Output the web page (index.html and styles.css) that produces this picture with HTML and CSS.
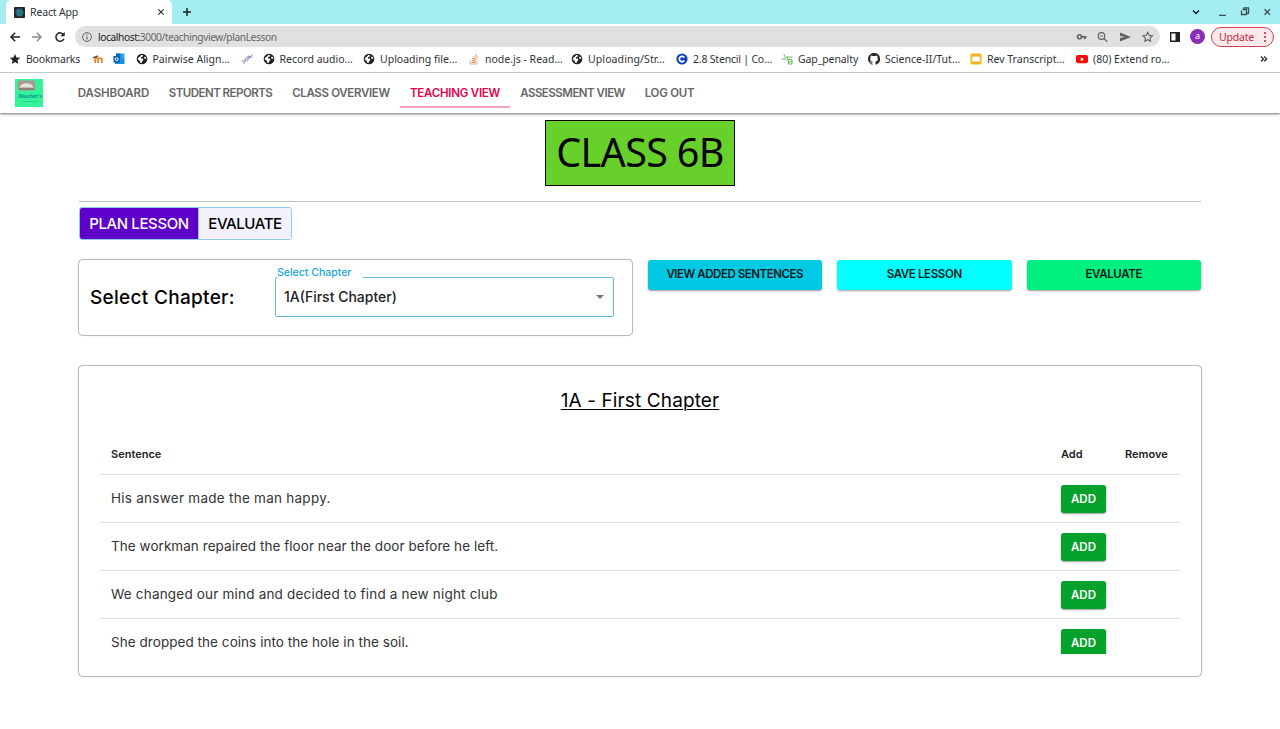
FILE: index.html
```html
<!DOCTYPE html>
<html lang="en">
<head>
<meta charset="utf-8">
<title>React App</title>
<link rel="stylesheet" href="styles.css">
</head>
<body>
<svg class="defs" width="0" height="0">
  <symbol id="globe" viewBox="0 0 12 12"><circle cx="6" cy="6" r="5.3" fill="#202124"/><path d="M1.700 5.200 4 3.600 5.300 2l1.800.2-.6 1.500-1.700.6.2 1.100 2 .2.3 1.400-1.300 1.800-.6 1.300-1.500-.6.2-1.500L2.400 7zM8 3.800l1.800.2.5 1.700-1.800.1z" fill="#fff"/></symbol>
</svg>
<div class="tabstrip">
  <div class="tab">
    <svg class="react" viewBox="0 0 12 12"><rect width="12" height="12" rx="1" fill="#20232a"/><g fill="none" stroke="#35a9c2" stroke-width=".7"><ellipse cx="6" cy="6" rx="4.5" ry="1.8"/><ellipse cx="6" cy="6" rx="4.5" ry="1.8" transform="rotate(60 6 6)"/><ellipse cx="6" cy="6" rx="4.5" ry="1.8" transform="rotate(120 6 6)"/></g><circle cx="6" cy="6" r=".9" fill="#35a9c2"/></svg>
    <span class="tab-title">React App</span>
    <svg class="close" viewBox="0 0 8 8"><path d="m1.3 1.3 5.4 5.4m0-5.4L1.3 6.7" stroke="#333" stroke-width="1.2"/></svg>
  </div>
  <svg class="plus" viewBox="0 0 10 10"><path d="M5 1v8M1 5h8" stroke="#202124" stroke-width="1.5"/></svg>
  <svg class="window" viewBox="0 0 84 12"><g fill="none" stroke="#3b5054" stroke-width="1.3"><path d="m1 4.5 3 3 3-3" stroke="#202124" stroke-width="1.5"/><path d="M27 9.3h7M50.500 3.500h4v5h-5v-4M52 3V1.800h4.500v5.500H55M72.500 3.200l5.500 5.500m0-5.500-5.500 5.500"/></g></svg>
</div>
<div class="toolbar">
  <svg class="navicons" viewBox="0 0 58 14"><g fill="none" stroke="#202124" stroke-width="1.5"><path d="M11 7H2m4.200-4.200L2 7l4.200 4.200"/><path d="M23 7h9m-4.200-4.200L32 7l-4.200 4.200" stroke="#8a8c8e"/><path d="M54.700 4.800a4.200 4.200 0 1 0 .3 4"/></g><path d="M55.700 2v4.300h-4.300z" fill="#202124"/></svg>
  <div class="omnibox">
    <svg class="info" viewBox="0 0 12 12"><circle cx="6" cy="6" r="4.400" fill="none" stroke="#5f6368"/><path d="M6 5.400v3M6 3.300v1.100" stroke="#5f6368" stroke-width="1.100"/></svg>
    <span class="url">localhost:<i>3000/teachingview/planLesson</i></span>
    <svg class="actions" viewBox="0 0 80 14"><g fill="none" stroke="#5f6368" stroke-width="1.200"><circle cx="3.500" cy="6.800" r="2" stroke-width="1.600"/><path d="M5.500 6.800h5M8.800 7v2.300" stroke-width="1.700"/><circle cx="25.500" cy="6" r="3.300"/><path d="m28 8.500 3.400 3.400M24 6h3"/><path d="m71.700 2.300 1.400 3 3.300.4-2.400 2.300.6 3.300-2.900-1.600-2.900 1.600.6-3.300-2.400-2.300 3.300-.4z" stroke-width="1.100"/></g><path d="m44 2.500 11 4.500-11 4.500V8l5-1-5-1z" fill="#5f6368"/></svg>
  </div>
  <svg class="panel" viewBox="0 0 12 12"><path d="M1.700 1.800h8.600v8.400H1.700z" fill="none" stroke="#202124" stroke-width="1.400"/><path d="M6.500 2h4v8h-4z" fill="#202124"/></svg>
  <span class="avatar">a</span>
  <span class="update">Update<svg viewBox="0 0 4 12"><g fill="#c5283d"><circle cx="2" cy="2" r="1.100"/><circle cx="2" cy="6" r="1.100"/><circle cx="2" cy="10" r="1.100"/></g></svg></span>
</div>
<div class="bookmarks">
  <span class="bm b1"><svg viewBox="0 0 12 12"><path d="m6 .9 1.500 3.500 3.800.3-2.900 2.500.9 3.700L6 8.900l-3.300 2 .9-3.700L.7 4.700l3.800-.3z" fill="#202124"/></svg>Bookmarks</span>
  <span class="bm b2"><svg viewBox="0 0 12 12"><path d="M3.200 10V6.500c0-1.900 2.900-1.900 2.900 0V10m0-3.500c0-1.900 3.700-1.900 3.700 0V10" fill="none" stroke="#ee7f2d" stroke-width="1.800"/><path d="m.8 4.300 4.200-1.900 1.800.7-2.800 1.600-2.600.4v2z" fill="#54483d"/></svg></span>
  <span class="bm b3"><svg viewBox="0 0 12 12"><path d="M3 .500h8.500V6H3z" fill="#28a8ea"/><path d="M3 .500h4.500V5H3z" fill="#0364b8"/><path d="m2 6 9.500-.5V11H2z" fill="#1490df"/><path d="M.5 3H7v6.500H.5z" fill="#0a5db5"/><circle cx="3.750" cy="6.200" r="1.500" fill="none" stroke="#fff"/></svg></span>
  <span class="bm b4"><svg><use href="#globe"/></svg>Pairwise Align…</span>
  <span class="bm b5"><svg viewBox="0 0 12 12"><g fill="none"><path d="M.8 8.200c4.200 1 3-5.200 7.200-4.200 1.500 0 2.500-1 3-2.500" stroke="#4e88c7"/><path d="M3 11.300C2.500 6.500 9.500 8.500 7.800 2.500M8 4.200h3.500" stroke="#9b7bbd"/><path d="m4 6.300 2.300 2.300M5.800 4.800 7.800 6.800" stroke="#d08a9b"/></g></svg></span>
  <span class="bm b6"><svg><use href="#globe"/></svg>Record audio…</span>
  <span class="bm b7"><svg><use href="#globe"/></svg>Uploading file…</span>
  <span class="bm b8"><svg viewBox="0 0 12 12"><path d="M2 7.500V11h7V7.500" fill="none" stroke="#bbb5ae"/><path d="M3.500 9.400h4M3.600 7.500l4 .5M4.200 5.400l3.700 1.400M5.500 3.300l3 2.500M7.500 1.300l2 3.300" stroke="#f48024"/></svg>node.js - Read…</span>
  <span class="bm b9"><svg><use href="#globe"/></svg>Uploading/Str…</span>
  <span class="bm b10"><svg viewBox="0 0 12 12"><circle cx="6" cy="6" r="5.600" fill="#1541b8"/><path d="M8.300 4.500a2.700 2.700 0 1 0 0 3" fill="none" stroke="#fff" stroke-width="1.700"/></svg>2.8 Stencil | Co…</span>
  <span class="bm b11"><svg viewBox="0 0 12 12"><path d="M.5 6h3L5 7.500M3 1.500 4.200 4.500M3.500 6l2-2h6M6.500 4v3M7.500 11V6.500h3.500V11zm0-2.200H11" fill="none" stroke="#4fb54a" stroke-width=".9"/></svg>Gap_penalty</span>
  <span class="bm b12"><svg viewBox="0 0 16 16"><path fill="#24292f" d="M8 0C3.580 0 0 3.580 0 8c0 3.540 2.290 6.530 5.470 7.590.4.070.55-.17.55-.38v-1.340c-2.230.48-2.700-1.070-2.700-1.070-.36-.92-.89-1.170-.89-1.170-.73-.5.05-.49.05-.49.81.06 1.230.83 1.230.83.72 1.230 1.880.87 2.340.66.07-.52.28-.87.51-1.070-1.780-.2-3.640-.89-3.640-3.950 0-.87.31-1.590.82-2.150-.08-.2-.36-1.020.08-2.120 0 0 .67-.21 2.200.82a7.600 7.600 0 0 1 4 0c1.530-1.040 2.200-.82 2.200-.82.44 1.100.16 1.920.08 2.120.51.56.82 1.270.82 2.150 0 3.070-1.870 3.750-3.650 3.950.29.25.54.73.54 1.480v2.200c0 .21.15.46.55.38A8 8 0 0 0 8 0z"/></svg>Science-II/Tut…</span>
  <span class="bm b13"><svg viewBox="0 0 12 12"><rect x=".5" y=".5" width="11" height="11" rx="1" fill="#f5b52a"/><path d="M2.300 3.600h7.400v4.800H2.300z" fill="#fff"/></svg>Rev Transcript…</span>
  <span class="bm b14"><svg viewBox="0 0 12 12"><rect y="2" width="12" height="8.300" rx="2" fill="#f20d0d"/><path d="m4.800 4.200 3.300 2-3.300 2z" fill="#fff"/></svg>(80) Extend ro…</span>
  <svg class="more" viewBox="0 0 8 8"><path d="m1 1.500 2.400 2.400L1 6.300m3.200-4.800 2.400 2.400-2.400 2.400" fill="none" stroke="#202124" stroke-width="1.300"/></svg>
</div>
<header class="appbar">
  <div class="logo">
    <svg viewBox="0 0 28 28"><rect width="28" height="28" fill="#34f49a"/><rect x="3" y="1.500" width="17" height="10" fill="#a99a91"/><path d="M4.500 8.500c1-5 12-6 14 0z" fill="#e9e1db"/><path d="M4 9.500h15v1H4z" fill="#79695f"/><path d="M8 22.500h15" stroke="#28b996" stroke-width=".6"/></svg>
    <span>Teacher's</span>
  </div>
  <nav>
    <a class="n1">DASHBOARD</a><a class="n2">STUDENT REPORTS</a><a class="n3">CLASS OVERVIEW</a><a class="n4 active">TEACHING VIEW</a><a class="n5">ASSESSMENT VIEW</a><a class="n6">LOG OUT</a>
  </nav>
</header>
<main>
  <h1>CLASS 6B</h1>
  <hr>
  <div class="toggle"><button class="on">PLAN LESSON</button><button>EVALUATE</button></div>
  <section class="controls">
    <div class="card chooser">
      <span class="prompt">Select Chapter:</span>
      <div class="select"><span class="label">Select Chapter</span><span class="value">1A(First Chapter)</span><svg viewBox="0 0 8 4"><path d="M0 0h8L4 4z" fill="#757575"/></svg></div>
    </div>
    <button class="action view">VIEW ADDED SENTENCES</button>
    <button class="action save">SAVE LESSON</button>
    <button class="action eval">EVALUATE</button>
  </section>
  <section class="card lesson">
    <h2>1A - First Chapter</h2>
    <div class="table">
      <div class="row head"><span>Sentence</span><span>Add</span><span>Remove</span></div>
      <div class="row"><span class="s1">His answer made the man happy.</span><button>ADD</button></div>
      <div class="row"><span class="s2">The workman repaired the floor near the door before he left.</span><button>ADD</button></div>
      <div class="row"><span class="s3">We changed our mind and decided to find a new night club</span><button>ADD</button></div>
      <div class="row"><span class="s4">She dropped the coins into the hole in the soil.</span><button>ADD</button></div>
    </div>
  </section>
</main>
</body>
</html>
```
FILE: styles.css
```css
* { box-sizing: border-box; }
body { margin: 0; height: 729px; overflow: hidden; background: #fff; color: #000; font-family: Inter, "Liberation Sans", sans-serif; }
svg { display: block; flex: none; }
.defs { position: absolute; }
button { font: inherit; letter-spacing: inherit; border: 0; padding: 0; white-space: nowrap; }

.tabstrip, .toolbar, .bookmarks { display: flex; align-items: center; font-family: "Noto Sans", sans-serif; font-size: 11px; color: #303236; white-space: nowrap; }
.tabstrip { height: 24px; background: #a3edf3; padding-left: 6px; }
.tab { width: 166px; height: 24px; background: #fff; border-radius: 5px 5px 0 0; display: flex; align-items: center; padding: 0 7px 0 8px; }
.react { width: 11px; height: 11px; }
.tab-title { margin-left: 5px; flex: 1; font-size: 10.5px; letter-spacing: -.15px; }
.close { width: 8px; height: 8px; }
.plus { width: 10px; height: 10px; margin-left: 10px; }
.window { width: 84px; height: 12px; margin-left: auto; margin-right: 4px; }

.toolbar { height: 25px; padding: 0 6px 0 9px; }
.navicons { width: 58px; height: 14px; }
.omnibox { width: 1085px; height: 21px; margin-left: 8px; border-radius: 11px; background: #e0e0e0; display: flex; align-items: center; padding: 0 4px 0 6px; }
.info { width: 12px; height: 12px; }
.url { margin-left: 5px; flex: 1; font-size: 10.2px; letter-spacing: -.4px; color: #202124; }
.url i { font-style: normal; color: #666; }
.actions { width: 80px; height: 14px; }
.panel { width: 12px; height: 12px; margin-left: 9px; }
.avatar { width: 15px; height: 15px; border-radius: 50%; background: #882db5; color: #fff; font-size: 9px; line-height: 14px; text-align: center; margin-left: 9px; }
.update { width: 63px; height: 20px; margin-left: 6px; border: 1px solid #cf4054; border-radius: 10px; background: #fdeaec; color: #c5283d; display: flex; align-items: center; justify-content: space-between; padding: 0 6px 0 7px; font-size: 10.5px; letter-spacing: -.2px; }
.update svg { width: 4px; height: 12px; }

.bookmarks { height: 24px; border-bottom: 1px solid #cfd1d3; padding: 0 12px 3px 9px; font-size: 10.5px; letter-spacing: 0; }
.bm { display: flex; align-items: center; gap: 5px; flex: none; }
.bm svg { width: 12px; height: 12px; }
.b1 { width: 83px; letter-spacing: -.2px; } .b2 { width: 21px; } .b3 { width: 22.500px; } .b4 { width: 105px; } .b5 { width: 22px; }
.b6 { width: 100.500px; } .b7 { width: 105px; } .b8 { width: 103px; } .b9 { width: 105px; letter-spacing: .1px; } .b10 { width: 105px; letter-spacing: -.2px; }
.b11 { width: 87px; letter-spacing: -.1px; } .b12 { width: 102px; } .b13 { width: 106px; } .b14 { width: 100px; }
.more { width: 8px; height: 8px; margin-left: auto; }

.appbar { height: 40px; display: flex; align-items: center; padding-left: 15px; box-shadow: 0 1px 2px rgba(0,0,0,.45), 0 2px 4px rgba(0,0,0,.12); background: #fff; }
.logo { position: relative; width: 28px; height: 28px; }
.logo span { position: absolute; left: 3px; top: 12px; font: italic bold 6.500px/10px "Liberation Serif", serif; letter-spacing: -.2px; color: #088f94; white-space: nowrap; }
nav { display: flex; margin-left: 25px; height: 35px; align-self: flex-start; font-weight: 600; font-size: 11.5px; color: #666; white-space: nowrap; }
nav a { display: flex; align-items: center; justify-content: center; padding-top: 5px; border-bottom: 1px solid transparent; }
nav .active { padding-top: 6px; color: #e5004c; border-bottom: 2px solid #f8a3bd; }
.n1 { width: 91px; letter-spacing: -.1px; } .n2 { width: 123px; letter-spacing: -.52px; } .n3 { width: 118px; letter-spacing: -.33px; }
.n4 { width: 110px; letter-spacing: -.23px; } .n5 { width: 125px; letter-spacing: -.5px; } .n6 { width: 69px; letter-spacing: -.25px; }

main { padding: 7px 78px 0; display: flex; flex-direction: column; }
h1 { margin: 0 auto; width: 190px; height: 66px; border: 1px solid #000; background: #68d02b; font: 400 39.500px/63px "Noto Sans", sans-serif; letter-spacing: -.65px; text-align: center; white-space: nowrap; }
hr { width: 1122px; height: 1px; margin: 15px 1px 5px; border: 0; background: #bfc3c3; }
.toggle { display: flex; width: 213px; height: 33px; margin-left: 1px; border: 1px solid #8bcfe9; border-radius: 3px; overflow: hidden; font-size: 15px; font-weight: 500; letter-spacing: -.4px; }
.toggle button { flex: 1; padding-bottom: 1px; background: #f4f1fc; }
.toggle .on { flex: none; width: 119px; background: #5e00c9; color: #fff; border-right: 1px solid #8bcfe9; }
.controls { display: flex; align-items: flex-start; margin-top: 19px; gap: 15px; }
.card { border: 1px solid #bbb; border-radius: 5px; background: #fff; box-shadow: 0 0 1px rgba(0,0,0,.25); }
.chooser { width: 555px; height: 77px; display: flex; align-items: center; padding-left: 11px; }
.prompt { width: 185px; font-size: 19px; font-weight: 500; letter-spacing: .3px; white-space: nowrap; }
.select { position: relative; width: 339px; height: 40px; margin-bottom: 2px; border: 1px solid #5fb9dc; border-radius: 2px; display: flex; align-items: center; justify-content: space-between; padding: 0 9px 0 8px; font-size: 14px; font-weight: 500; color: #222; }
.select svg { width: 8px; height: 4px; }
.label { position: absolute; left: 1px; top: -13px; width: 86px; height: 15px; background: #fff; color: #18a8dc; font-size: 10.500px; line-height: 15px; white-space: nowrap; }
.action { width: 174.500px; height: 30px; margin-top: 1px; padding-bottom: 3px; border-radius: 3px; font-size: 11.500px; font-weight: 600; letter-spacing: -.45px; color: #0b1a1c; box-shadow: 0 1px 2px rgba(0,0,0,.4); }
.view { background: #00c9e3; margin-left: -.5px; } .save { background: #00ffff; letter-spacing: -.35px; } .eval { background: #00f07f; letter-spacing: -.35px; }
.lesson { width: 1124px; height: 312px; margin-top: 29px; padding: 0 22px; }
h2 { margin: 20px 0 0; height: 30px; font-size: 19px; line-height: 30px; font-weight: 400; letter-spacing: .12px; text-align: center; text-decoration: underline; text-decoration-thickness: 1px; text-underline-offset: 2px; }
.table { margin-top: 18px; height: 220px; overflow: hidden; }
.row { display: grid; grid-template-columns: 950px 64px 54px; align-items: center; height: 48px; padding-left: 10px; border-bottom: 1px solid #ddd; font-size: 13.500px; color: #333; white-space: nowrap; }
.row span { justify-self: start; }
.row:not(.head) span { padding-bottom: 2px; }
.s1 { letter-spacing: .26px; } .s2 { letter-spacing: .05px; } .s3 { letter-spacing: .19px; } .s4 { letter-spacing: .05px; }
.head { height: 41px; font-size: 11px; font-weight: 600; color: #222; }
.row button { width: 45px; height: 28px; border-radius: 3px; background: #04a12b; color: #fff; font-size: 11.500px; font-weight: 600; letter-spacing: 0; box-shadow: 0 1px 2px rgba(0,0,0,.4); }
```
